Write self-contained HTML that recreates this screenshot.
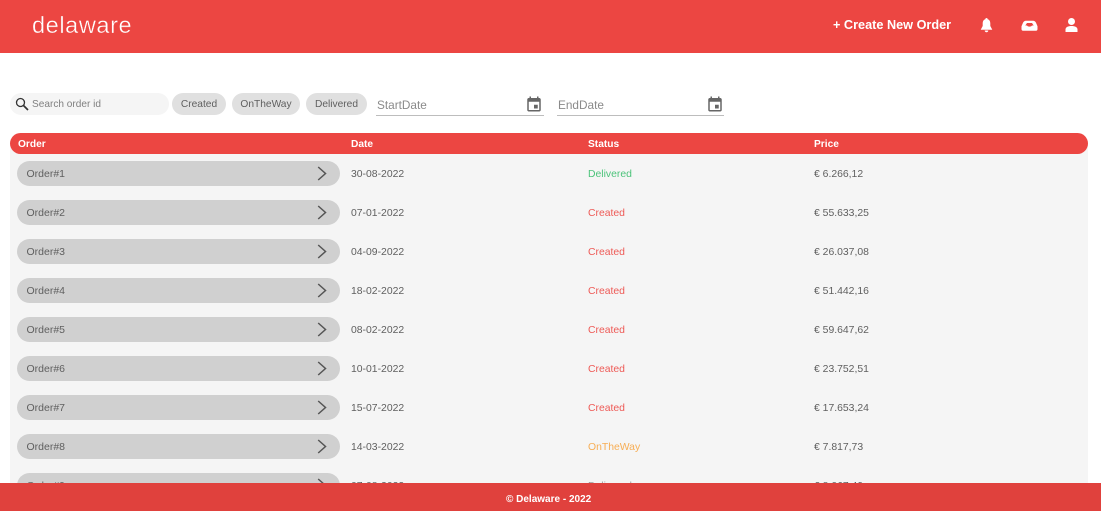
<!DOCTYPE html>
<html lang="en">
<head>
<meta charset="utf-8">
<title>Orders</title>
<style>
html,body{margin:0;padding:0;width:1101px;height:511px;overflow:hidden;background:#fff;font-family:"Liberation Sans",sans-serif}
.a{position:absolute;white-space:nowrap}
#hdr{position:absolute;left:0;top:0;width:1101px;height:53px;background:#ec4642}
#logo{left:32px;top:10px;font-size:23.5px;line-height:30px;color:#fff;letter-spacing:.6px;-webkit-text-stroke:.35px #ec4642}
#new{left:833px;top:17px;font-size:12.7px;line-height:16px;font-weight:bold;color:#fff}
.chip{position:absolute;top:93px;height:22px;border-radius:11px;background:#e0e0e0;color:#5f5f5f;font-size:10.2px;line-height:24px;text-align:center}
#search{position:absolute;left:10px;top:93px;width:159px;height:22px;border-radius:11px;background:#f5f5f5}
#search span{position:absolute;left:22px;top:0;font-size:10.1px;line-height:24px;color:#808080}
.date{position:absolute;top:94px;height:21px;border-bottom:1px solid #bdbdbd;color:#8a8a8a;font-size:11.8px;line-height:22px}
.date svg{position:absolute;top:.5px}
#body{position:absolute;left:10px;top:143px;width:1078px;height:345px;background:#f5f5f5}
#head{position:absolute;left:10px;top:133px;width:1078px;height:21px;border-radius:10.5px;background:#ec4642}
.th{position:absolute;top:134px;color:#fff;font-size:10.2px;line-height:21px;font-weight:bold}
.pill{position:absolute;left:17px;width:323px;height:25px;border-radius:12.5px;background:#d0d0d0;color:#5f5f5f;font-size:10.5px;line-height:25px}
.pill span{position:absolute;left:9.5px;top:.5px}
.pill svg{position:absolute;left:298px;top:4px}
.c{position:absolute;font-size:10.4px;line-height:25px;color:#5f5f5f;margin-top:.5px}
.g{color:#4cc37a}.r{color:#ee5a56}.o{color:#f7ae55}
#ftr{position:absolute;left:0;top:483px;width:1101px;height:28px;background:#e0413d;color:#fff;font-size:10px;text-align:center;font-weight:bold}
#ftr span{position:absolute;left:506px;top:0;line-height:33px;white-space:nowrap}
</style>
</head>
<body>
<div id="hdr"></div>
<div class="a" id="logo">delaware</div>
<div class="a" id="new">+ Create New Order</div>
<svg class="a" style="left:979px;top:17px" width="15" height="16" viewBox="0 0 15 16"><path fill="#fff" d="M7.500 1C8.200 1 8.700 1.500 8.700 2.200C10.700 2.800 11.300 4.500 11.300 6.500V9L13.300 12.800H1.700L3.700 9V6.500C3.700 4.500 4.300 2.800 6.300 2.200C6.300 1.500 6.800 1 7.500 1ZM5.700 13.500H9.300C9.300 14.600 8.500 15.200 7.500 15.200C6.500 15.200 5.700 14.600 5.700 13.500Z"/></svg>
<svg class="a" style="left:1021px;top:18px" width="17" height="14" viewBox="0 0 17 14"><path fill="#fff" fill-rule="evenodd" d="M5 2.700H12C13.500 2.700 14.500 3.500 15 4.800L16.500 8.300V11C16.500 12.200 16 12.700 15 12.700H2C1 12.700 .5 12.200 .5 11V8.300L2 4.800C2.500 3.500 3.500 2.700 5 2.700ZM6 5L4.300 7.500H6C6.500 8.300 7.300 8.600 8.500 8.600C9.700 8.600 10.500 8.300 11 7.500H12.700L11 5Z"/></svg>
<svg class="a" style="left:1064px;top:17px" width="15" height="16" viewBox="0 0 15 16"><circle cx="7.500" cy="4.500" r="3.500" fill="#fff"/><path fill="#fff" d="M1.500 15V12.500C1.500 10.300 4 9 7.500 9C11 9 13.500 10.300 13.500 12.500V15Z"/></svg>

<div id="search"><svg style="position:absolute;left:4px;top:3px" width="16" height="16" viewBox="0 0 16 16"><circle cx="6.500" cy="6.500" r="4" fill="none" stroke="#333" stroke-width="1.300"/><path d="M9.500 9.500L14 14" stroke="#333" stroke-width="1.700"/></svg><span>Search order id</span></div>
<div class="chip" style="left:172px;width:54px">Created</div>
<div class="chip" style="left:232px;width:68px">OnTheWay</div>
<div class="chip" style="left:306px;width:61px">Delivered</div>
<div class="date" style="left:376px;width:168px"><span style="position:absolute;left:1px;top:0">StartDate</span><svg style="left:149px" width="18" height="18" viewBox="0 0 24 24"><path fill="#666" d="M19 4h-1V2h-2v2H8V2H6v2H5c-1.100 0-2 .9-2 2v14c0 1.100.9 2 2 2h14c1.100 0 2-.9 2-2V6c0-1.100-.9-2-2-2zm0 16H5V9h14v11zM12 13h5v5h-5z"/></svg></div>
<div class="date" style="left:557px;width:167px"><span style="position:absolute;left:1px;top:0">EndDate</span><svg style="left:149px" width="18" height="18" viewBox="0 0 24 24"><path fill="#666" d="M19 4h-1V2h-2v2H8V2H6v2H5c-1.100 0-2 .9-2 2v14c0 1.100.9 2 2 2h14c1.100 0 2-.9 2-2V6c0-1.100-.9-2-2-2zm0 16H5V9h14v11zM12 13h5v5h-5z"/></svg></div>

<div id="body"></div>
<div id="head"></div>
<div class="th" style="left:18px">Order</div>
<div class="th" style="left:351px">Date</div>
<div class="th" style="left:588px">Status</div>
<div class="th" style="left:814px">Price</div>

<div class="pill" style="top:161px"><span>Order#1</span><svg width="16" height="17" viewBox="0 0 16 17"><path d="M3.200 2L10.500 8.500L3.200 15" fill="none" stroke="#555" stroke-width="1.500"/></svg></div>
<div class="c" style="left:351px;top:161px">30-08-2022</div><div class="c g" style="left:588px;top:161px">Delivered</div><div class="c" style="left:814px;top:161px">€ 6.266,12</div>

<div class="pill" style="top:200px"><span>Order#2</span><svg width="16" height="17" viewBox="0 0 16 17"><path d="M3.200 2L10.500 8.500L3.200 15" fill="none" stroke="#555" stroke-width="1.500"/></svg></div>
<div class="c" style="left:351px;top:200px">07-01-2022</div><div class="c r" style="left:588px;top:200px">Created</div><div class="c" style="left:814px;top:200px">€ 55.633,25</div>

<div class="pill" style="top:239px"><span>Order#3</span><svg width="16" height="17" viewBox="0 0 16 17"><path d="M3.200 2L10.500 8.500L3.200 15" fill="none" stroke="#555" stroke-width="1.500"/></svg></div>
<div class="c" style="left:351px;top:239px">04-09-2022</div><div class="c r" style="left:588px;top:239px">Created</div><div class="c" style="left:814px;top:239px">€ 26.037,08</div>

<div class="pill" style="top:278px"><span>Order#4</span><svg width="16" height="17" viewBox="0 0 16 17"><path d="M3.200 2L10.500 8.500L3.200 15" fill="none" stroke="#555" stroke-width="1.500"/></svg></div>
<div class="c" style="left:351px;top:278px">18-02-2022</div><div class="c r" style="left:588px;top:278px">Created</div><div class="c" style="left:814px;top:278px">€ 51.442,16</div>

<div class="pill" style="top:317px"><span>Order#5</span><svg width="16" height="17" viewBox="0 0 16 17"><path d="M3.200 2L10.500 8.500L3.200 15" fill="none" stroke="#555" stroke-width="1.500"/></svg></div>
<div class="c" style="left:351px;top:317px">08-02-2022</div><div class="c r" style="left:588px;top:317px">Created</div><div class="c" style="left:814px;top:317px">€ 59.647,62</div>

<div class="pill" style="top:356px"><span>Order#6</span><svg width="16" height="17" viewBox="0 0 16 17"><path d="M3.200 2L10.500 8.500L3.200 15" fill="none" stroke="#555" stroke-width="1.500"/></svg></div>
<div class="c" style="left:351px;top:356px">10-01-2022</div><div class="c r" style="left:588px;top:356px">Created</div><div class="c" style="left:814px;top:356px">€ 23.752,51</div>

<div class="pill" style="top:395px"><span>Order#7</span><svg width="16" height="17" viewBox="0 0 16 17"><path d="M3.200 2L10.500 8.500L3.200 15" fill="none" stroke="#555" stroke-width="1.500"/></svg></div>
<div class="c" style="left:351px;top:395px">15-07-2022</div><div class="c r" style="left:588px;top:395px">Created</div><div class="c" style="left:814px;top:395px">€ 17.653,24</div>

<div class="pill" style="top:434px"><span>Order#8</span><svg width="16" height="17" viewBox="0 0 16 17"><path d="M3.200 2L10.500 8.500L3.200 15" fill="none" stroke="#555" stroke-width="1.500"/></svg></div>
<div class="c" style="left:351px;top:434px">14-03-2022</div><div class="c o" style="left:588px;top:434px">OnTheWay</div><div class="c" style="left:814px;top:434px">€ 7.817,73</div>

<div class="pill" style="top:473px"><span>Order#9</span><svg width="16" height="17" viewBox="0 0 16 17"><path d="M3.200 2L10.500 8.500L3.200 15" fill="none" stroke="#555" stroke-width="1.500"/></svg></div>
<div class="c" style="left:351px;top:473px">07-08-2022</div><div class="c" style="left:588px;top:473px;color:#9a9a9a">Delivered</div><div class="c" style="left:814px;top:473px">€ 8.067,49</div>

<div id="ftr"><span>© Delaware - 2022</span></div>
</body>
</html>
